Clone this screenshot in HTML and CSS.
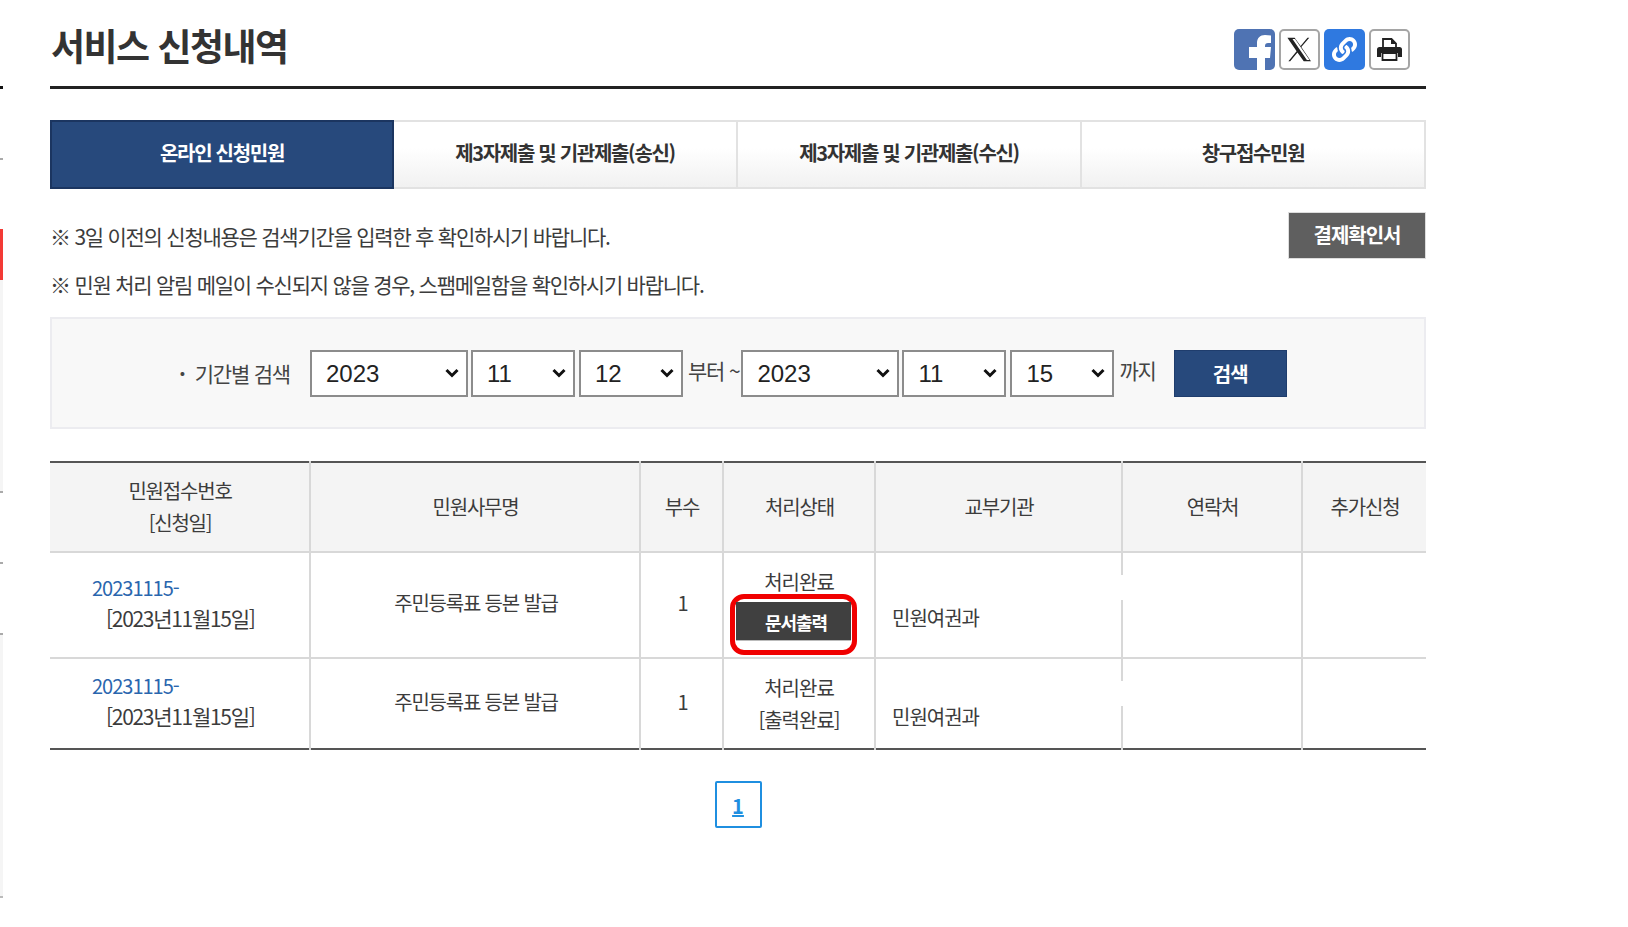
FILE: index.html
```html
<!DOCTYPE html>
<html lang="ko">
<head>
    <meta charset="UTF-8">
    <title>서비스 신청내역</title>
    <link rel="stylesheet" href="styles.css">
</head>
<body>
    <div class="page">
        <div class="side">
            <div class="side-a"></div>
            <div class="side-b"></div>
            <div class="side-red"></div>
            <div class="side-c"></div>
            <div class="side-d"></div>
            <div class="side-e"></div>
            <div class="side-f"></div>
        </div>

        <div class="content">
            <div class="top">
                <h2>서비스 신청내역</h2>
                <div class="share">
                    <a class="ico ico-fb" href="#" aria-label="facebook">
                        <svg viewBox="0 0 41 41" width="41" height="41"><path fill="#fff" d="M23 41V29h-8V18h8v-4c0-5 3-8 8-8 2 0 4 .2 6 .5V14h-3c-2 0-3 1-3 3v1h6l-1 11h-5v12z"/></svg>
                    </a>
                    <a class="ico ico-line" href="#" aria-label="X">
                        <svg viewBox="0 0 24 24" width="29" height="29"><path fill="#222" d="M18.600 2.250h1.500l-6.600 7.700 8 11.800h-6l-5.200-7.300-6 7.300h-1.500l6.800-8.200-7.600-11.300h6l4.900 6.900zm-12.400 1.100 11.900 17.300h2.200L8.300 3.350z"/></svg>
                    </a>
                    <a class="ico ico-link" href="#" aria-label="link">
                        <svg viewBox="0 0 512 512" width="25" height="25"><path fill="#fff" d="M326.612 185.391c59.747 59.809 58.927 155.698.36 214.59-.11.12-.24.25-.36.37l-67.2 67.2c-59.27 59.27-155.699 59.262-214.96 0-59.27-59.26-59.27-155.7 0-214.96l37.106-37.106c9.84-9.84 26.786-3.3 27.294 10.606.648 17.722 3.826 35.527 9.69 52.721 1.986 5.822.567 12.262-3.783 16.612l-13.087 13.087c-28.026 28.026-28.905 73.66-1.155 101.96 28.024 28.579 74.086 28.749 102.325.51l67.2-67.19c28.191-28.191 28.073-73.757 0-101.83-3.701-3.694-7.429-6.564-10.341-8.569a16.037 16.037 0 0 1-6.947-12.606c-.396-10.567 3.348-21.456 11.698-29.806l21.054-21.055c5.521-5.521 14.182-6.199 20.584-1.731a152.482 152.482 0 0 1 20.522 17.197zM467.547 44.449c-59.261-59.262-155.69-59.27-214.96 0l-67.2 67.2c-.12.12-.25.25-.36.37-58.566 58.892-59.387 154.781.36 214.59a152.454 152.454 0 0 0 20.521 17.196c6.402 4.468 15.064 3.789 20.584-1.731l21.054-21.055c8.35-8.35 12.094-19.239 11.698-29.806a16.037 16.037 0 0 0-6.947-12.606c-2.912-2.005-6.64-4.875-10.341-8.569-28.073-28.073-28.191-73.639 0-101.83l67.2-67.19c28.239-28.239 74.3-28.069 102.325.51 27.75 28.3 26.872 73.934-1.155 101.96l-13.087 13.087c-4.35 4.35-5.769 10.79-3.783 16.612 5.864 17.194 9.042 34.999 9.69 52.721.509 13.906 17.454 20.446 27.294 10.606l37.106-37.106c59.271-59.259 59.271-155.699.001-214.959z"/></svg>
                    </a>
                    <a class="ico ico-line" href="#" aria-label="print">
                        <svg viewBox="0 0 25 23" width="25" height="23">
                            <path fill="#fff" stroke="#222" stroke-width="1.800" d="M6 10V1h8.500L19 5.500V10"/>
                            <path fill="#222" d="M14 1l5.500 5H14z"/>
                            <path fill="#222" d="M2.500 9h20a2.500 2.500 0 0 1 2.500 2.500V19h-4v-4H4v4H0v-7.500A2.500 2.500 0 0 1 2.500 9z"/>
                            <path fill="#fff" stroke="#222" stroke-width="1.800" d="M5.500 15v7h14v-7z"/>
                        </svg>
                    </a>
                </div>
            </div>

            <div class="tabs">
                <a class="tab on" href="#">온라인 신청민원</a>
                <a class="tab" href="#">제3자제출 및 기관제출(송신)</a>
                <a class="tab" href="#">제3자제출 및 기관제출(수신)</a>
                <a class="tab" href="#">창구접수민원</a>
            </div>

            <div class="notes">
                <div class="note-text">
                    <p>※ 3일 이전의 신청내용은 검색기간을 입력한 후 확인하시기 바랍니다.</p>
                    <p>※ 민원 처리 알림 메일이 수신되지 않을 경우, 스팸메일함을 확인하시기 바랍니다.</p>
                </div>
                <a class="btn-pay" href="#">결제확인서</a>
            </div>

            <div class="search">
                <span class="search-label"><b>·</b>기간별 검색</span>
                <select class="sel-y"><option>2023</option></select>
                <select class="sel-m"><option>11</option></select>
                <select class="sel-m"><option>12</option></select>
                <span class="unit">부터 ~</span>
                <select class="sel-y"><option>2023</option></select>
                <select class="sel-m"><option>11</option></select>
                <select class="sel-m"><option>15</option></select>
                <span class="unit">까지</span>
                <button class="btn-search">검색</button>
            </div>

            <table class="list">
                <colgroup>
                    <col class="c1"><col class="c2"><col class="c3"><col class="c4"><col class="c5"><col class="c6"><col class="c7">
                </colgroup>
                <thead>
                    <tr>
                        <th>민원접수번호<br>[신청일]</th>
                        <th>민원사무명</th>
                        <th>부수</th>
                        <th>처리상태</th>
                        <th>교부기관</th>
                        <th>연락처</th>
                        <th>추가신청</th>
                    </tr>
                </thead>
                <tbody>
                    <tr class="row1">
                        <td class="no"><a href="#">20231115-</a><br><span>[2023년11월15일]</span></td>
                        <td class="ac">주민등록표 등본 발급</td>
                        <td class="ac">1</td>
                        <td class="state">처리완료
                            <div class="mark"><a class="btn-doc" href="#">문서출력</a></div>
                        </td>
                        <td class="org">민원여권과</td>
                        <td class="tel"><i class="gap"></i></td>
                        <td></td>
                    </tr>
                    <tr class="row2">
                        <td class="no"><a href="#">20231115-</a><br><span>[2023년11월15일]</span></td>
                        <td class="ac">주민등록표 등본 발급</td>
                        <td class="ac">1</td>
                        <td class="state">처리완료<br>[출력완료]</td>
                        <td class="org">민원여권과</td>
                        <td class="tel"><i class="gap"></i></td>
                        <td></td>
                    </tr>
                </tbody>
            </table>

            <div class="paging"><a href="#">1</a></div>
        </div>
    </div>
</body>
</html>
```

FILE: styles.css
```css
* {
    box-sizing: border-box;
}
body {
    margin: 0;
    background: #fff;
    color: #333;
    font-family: "Noto Sans CJK KR", "Noto Sans", sans-serif;
    font-size: 20px;
    letter-spacing: -1px;
}
a {
    color: inherit;
    text-decoration: none;
}
.page {
    display: flex;
    min-height: 927px;
}

/* cut off left menu */
.side {
    flex: 0 0 3px;
    height: 897px;
}
.side-a {
    height: 3px;
    margin-top: 86px;
    background: #111;
}
.side-b {
    height: 2px;
    margin-top: 69px;
    background: #aaa;
}
.side-red {
    height: 51px;
    margin-top: 69px;
    background: #f33a35;
}
.side-c {
    height: 213px;
    background: #f5f5f5;
    border-bottom: 2px solid #aaa;
}
.side-d {
    height: 71px;
    border-bottom: 2px solid #aaa;
}
.side-e {
    height: 71px;
    border-bottom: 2px solid #aaa;
}
.side-f {
    height: 263px;
    background: #f5f5f5;
    border-bottom: 2px solid #bbb;
}

.content {
    flex: 0 0 1376px;
    margin-left: 47px;
}
.top {
    display: flex;
    justify-content: space-between;
    height: 89px;
    border-bottom: 3px solid #222;
}
.top h2 {
    margin: 17px 0 0 1px;
    font-size: 37px;
    line-height: 56px;
    font-weight: 700;
    letter-spacing: -1.5px;
    color: #333;
}
.share {
    display: flex;
    gap: 4px;
    margin: 29px 16px 0 0;
}
.ico {
    display: flex;
    align-items: center;
    justify-content: center;
    width: 41px;
    height: 41px;
    border-radius: 5px;
    overflow: hidden;
}
.ico-fb {
    background: #4f73b3;
}
.ico-line {
    background: #fff;
    border: 2px solid #a5a5a5;
}
.ico-link {
    background: #2f79e0;
}

.tabs {
    display: flex;
    margin-top: 31px;
}
.tab {
    flex: 0 0 344px;
    height: 69px;
    line-height: 62px;
    text-align: center;
    font-weight: 700;
    letter-spacing: -1.3px;
    color: #333;
    border: 2px solid #e2e2e2;
    border-left: 0;
    background: linear-gradient(#fff 40%, #f1f1f1);
}
.tab.on {
    background: #27497c;
    border: 2px solid #1b3560;
    color: #fff;
}

.notes {
    display: flex;
    justify-content: space-between;
    margin-top: 24px;
}
.note-text {
    padding-top: 9px;
}
.notes p {
    margin: 0 0 19px;
    font-size: 21px;
    line-height: 29px;
    letter-spacing: -1.25px;
    color: #3c3c3c;
}
.btn-pay {
    width: 138px;
    height: 47px;
    margin-top: -1px;
    line-height: 43px;
    text-align: center;
    font-weight: 700;
    color: #fff;
    background: #5f5f5f;
    border: 1px solid #ddd;
}

.search {
    display: flex;
    align-items: center;
    height: 112px;
    margin-top: -1px;
    padding-left: 127px;
    background: #f8f8f8;
    border: 2px solid #ececf0;
}
.search-label {
    width: 131px;
    font-size: 21px;
    letter-spacing: -1.2px;
    color: #444;
}
.search-label b {
    margin-right: 10px;
}
.search select {
    appearance: none;
    height: 47px;
    padding-left: 14px;
    font-family: "Liberation Sans", sans-serif;
    font-size: 24px;
    letter-spacing: 0;
    color: #222;
    background: #fff url("data:image/svg+xml,%3Csvg xmlns='http://www.w3.org/2000/svg' width='14' height='10'%3E%3Cpath d='M1.500 2l5.500 5.500L12.500 2' fill='none' stroke='%23111' stroke-width='3'/%3E%3C/svg%3E") no-repeat right 7px center;
    border: 2px solid #8c8c8c;
    border-radius: 0;
    margin-right: 4px;
}
.search .sel-y {
    width: 158px;
    margin-right: 3px;
}
.sel-m {
    width: 104px;
}
.unit {
    margin: -6px 0 0 1px;
    padding-right: 2px;
    font-size: 21px;
    letter-spacing: -1.2px;
    white-space: nowrap;
    color: #444;
}
.btn-search {
    width: 113px;
    height: 47px;
    margin-left: 16px;
    font-family: inherit;
    font-size: 20px;
    font-weight: 700;
    letter-spacing: -1px;
    color: #fff;
    background: #27497c;
    border: 1px solid #1f3d6d;
}

.list {
    width: 100%;
    margin-top: 32px;
    border-collapse: collapse;
    table-layout: fixed;
    border-top: 2px solid #555;
    border-bottom: 2px solid #555;
}
.c1 { width: 260px; }
.c2 { width: 330px; }
.c3 { width: 83px; }
.c4 { width: 152px; }
.c5 { width: 247px; }
.c6 { width: 180px; }
.c7 { width: 124px; }
.list th,
.list td {
    padding: 0;
    border-left: 2px solid #d8d8d8;
    border-top: 2px solid #d8d8d8;
    line-height: 32px;
    color: #3c3c3c;
    text-align: center;
}
.list th:first-child,
.list td:first-child {
    border-left: 0;
}
.list thead th {
    height: 90px;
    padding-left: 1px;
    border-top: 0;
    font-weight: 400;
    letter-spacing: -1.2px;
    background: #f4f4f4;
}
.row1 td {
    height: 106px;
}
.row2 td {
    height: 91px;
}
.list .no {
    padding: 0 0 4px 42px;
    line-height: 30px;
    text-align: left;
}
.no a {
    color: #2a66ae;
}
.no span {
    margin-left: 14px;
    font-size: 21px;
    letter-spacing: -1.3px;
}
.list .ac {
    padding: 0 0 4px 2px;
    letter-spacing: -1.2px;
}
.row1 .state {
    padding-top: 13px;
    vertical-align: top;
}
.row1 .org,
.row2 .org {
    padding-top: 26px;
}
.list .org {
    padding-left: 16px;
    text-align: left;
}
.list .tel {
    position: relative;
}
.mark {
    width: 127px;
    height: 61px;
    margin: -4px 0 0 6px;
    padding: 3px 1px;
    border: 5px solid #f00000;
    border-radius: 14px;
}
.btn-doc {
    display: block;
    height: 39px;
    padding-left: 5px;
    line-height: 40px;
    font-size: 18px;
    font-weight: 700;
    color: #fff;
    background: #404040;
    border-bottom: 1px solid #bbb;
}

/* white patch that cuts the column line */
.gap {
    position: absolute;
    left: -2px;
    top: 22px;
    width: 2px;
    height: 25px;
    background: #fff;
}

.paging {
    display: flex;
    justify-content: center;
    margin-top: 31px;
}
.paging a {
    width: 47px;
    height: 47px;
    line-height: 46px;
    text-align: center;
    font-weight: 700;
    letter-spacing: 0;
    color: #1f8fe0;
    text-decoration: underline;
    border: 2px solid #1f8fe0;
    border-radius: 2px;
}
```
